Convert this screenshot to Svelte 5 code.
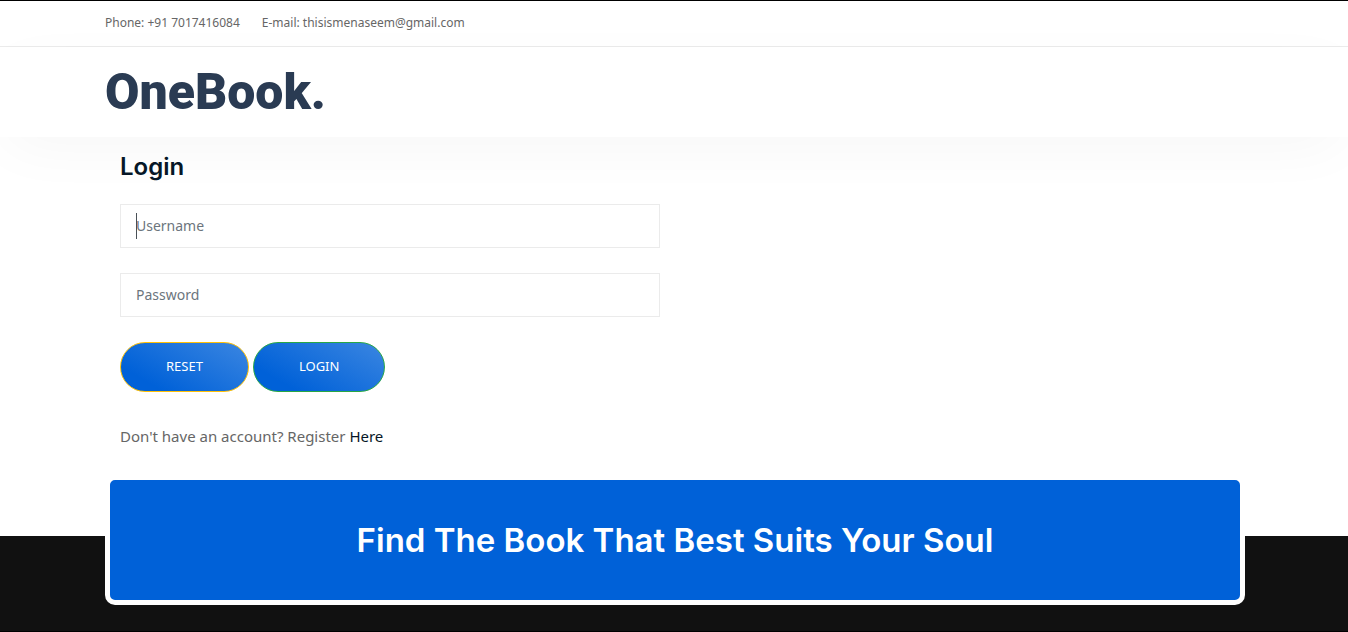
<script>
  let username = $state('');
  let password = $state('');

  function submit(event) {
    event.preventDefault();
  }
</script>

<div class="page">
  <div class="topbar">
    <div class="container contacts">
      <span>Phone: +91 7017416084</span>
      <span>E-mail: thisismenaseem@gmail.com</span>
    </div>
  </div>

  <header class="header">
    <div class="container">
      <a class="logo" href="#home">OneBook.</a>
    </div>
  </header>

  <main class="container main">
    <form class="login" onsubmit={submit}>
      <h1>Login</h1>
      <div class="field active">
        <input type="text" aria-label="Username" placeholder="Username" bind:value={username} />
      </div>
      <div class="field">
        <input type="password" aria-label="Password" placeholder="Password" bind:value={password} />
      </div>
      <div class="actions">
        <button class="reset" type="reset">RESET</button>
        <button class="submit" type="submit">LOGIN</button>
      </div>
      <p>Don't have an account? Register <a href="#register">Here</a></p>
    </form>
  </main>

  <footer class="footer">
    <div class="container banner">
      <h2>Find The Book That Best Suits Your Soul</h2>
    </div>
  </footer>
</div>

<style>
  :global(body) {
    background: #fff;
  }

  .page,
  .page * {
    box-sizing: border-box;
  }

  .page {
    border-top: 1px solid #000;
    color: #666;
    font-family: 'Noto Sans', sans-serif;
    font-size: 15px;
    line-height: 26px;
  }

  .topbar,
  .header,
  .footer {
    padding-left: 2px;
  }

  .container {
    width: 100%;
    max-width: 1140px;
    margin: 0 auto;
  }

  .topbar {
    border-bottom: 1px solid #ebebeb;
  }

  .contacts {
    display: flex;
    gap: 22px;
    padding: 9px 0 10px;
    font-size: 12px;
  }

  .header {
    padding-top: 20px;
    padding-bottom: 20px;
    background: #fff;
    box-shadow: 0 16px 60px -8px rgba(0, 0, 0, 0.04);
    clip-path: inset(-30px 0 -80px);
  }

  .logo {
    display: block;
    color: #2a3b53;
    font-family: Roboto, sans-serif;
    font-size: 50px;
    font-weight: 900;
    line-height: 50px;
    text-decoration: none;
  }

  .main {
    padding: 12px 16px 0;
    position: relative;
  }

  .login {
    max-width: 540px;
  }

  h1 {
    margin: 0 0 20px;
    color: #061727;
    font-family: Inter, sans-serif;
    font-size: 24px;
    font-weight: 600;
    line-height: 35px;
  }

  .field {
    position: relative;
    margin-bottom: 25px;
  }

  .field input {
    display: block;
    width: 100%;
    height: 44px;
    padding: 0 15px 2px;
    border: 1px solid #ebebeb;
    border-radius: 0;
    outline: none;
    background: #fff;
    color: #495057;
    font: inherit;
    font-size: 14px;
  }

  .field input::placeholder {
    color: #6c757d;
    opacity: 1;
  }

  .active::after {
    content: '';
    position: absolute;
    top: 9px;
    left: 16px;
    width: 1px;
    height: 26px;
    background: #495057;
  }

  .actions {
    display: flex;
    gap: 4px;
  }

  button {
    height: 50px;
    padding: 0 45px 2px;
    border: 1px solid #28a745;
    border-radius: 25px;
    background: linear-gradient(30deg, #0061d8 20%, #3b86e1 100%);
    color: #fff;
    font: 13px 'Noto Sans', sans-serif;
    cursor: pointer;
  }

  .reset {
    border-color: #ffc107;
  }

  p {
    margin: 31px 0 0;
  }

  p a {
    color: #061727;
    text-decoration: none;
  }

  .footer {
    display: flex;
    margin-top: 87px;
    padding-bottom: 26px;
    border-bottom: 1px solid #000;
    background: #111;
  }

  .banner {
    margin-top: -61px;
    padding: 38px 20px 37px;
    border: 5px solid #fff;
    border-radius: 10px;
    background: #0061d8;
  }

  h2 {
    margin: 0;
    color: #fff;
    font-family: Inter, sans-serif;
    font-size: 33px;
    font-weight: 600;
    line-height: 45px;
    text-align: center;
  }
</style>
